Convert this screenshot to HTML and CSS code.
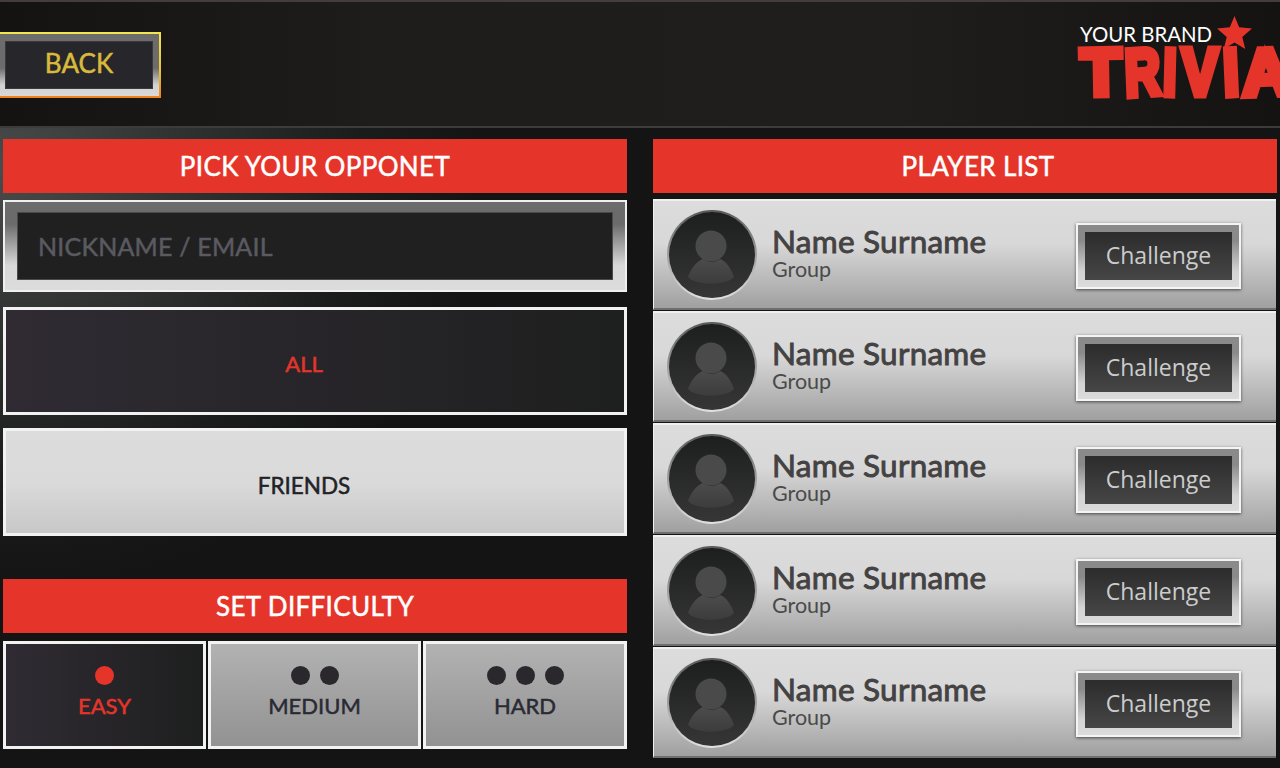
FILE: index.html
```html
<!DOCTYPE html>
<html lang="en">
<head>
    <meta charset="UTF-8">
    <meta name="viewport" content="width=device-width, initial-scale=1.0">
    <title>Your Brand Trivia</title>
    <link rel="stylesheet" href="styles.css">
</head>
<body>
    <header class="topbar">
        <a class="back" href="#">
            <span class="back-frame"><span class="back-inner">BACK</span></span>
        </a>
        <div class="logo">
            <div class="logo-brand">YOUR BRAND</div>
            <svg class="logo-star" viewBox="0 0 36 34"><polygon points="18,0 22.8,11.6 36,13 26,21.6 29.1,34 18,27.2 6.9,34 10,21.6 0,13 13.2,11.6"/></svg>
            <div class="logo-name"><span class="l1">T</span><span class="l2">R</span><span class="l3">I</span><span class="l4">V</span><span class="l5">I</span><span class="l6">A</span></div>
        </div>
    </header>

    <main class="content">
        <section class="left">
            <h2 class="title">PICK YOUR OPPONET</h2>
            <div class="search">
                <input class="search-input" type="text" placeholder="NICKNAME / EMAIL">
            </div>
            <div class="choice choice-on">ALL</div>
            <div class="choice choice-off">FRIENDS</div>

            <h2 class="title title-level">SET DIFFICULTY</h2>
            <div class="levels">
                <div class="level level-easy level-on">
                    <div class="dots"><i></i></div>
                    EASY
                </div>
                <div class="level level-medium">
                    <div class="dots"><i></i><i></i></div>
                    MEDIUM
                </div>
                <div class="level level-hard">
                    <div class="dots"><i></i><i></i><i></i></div>
                    HARD
                </div>
            </div>
        </section>

        <section class="right">
            <h2 class="title title-list">PLAYER LIST</h2>
            <ul class="players">
                <li class="player">
                    <svg class="avatar" viewBox="0 0 90 90"><use href="#person"/></svg>
                    <div class="who"><div class="name">Name Surname</div><div class="group">Group</div></div>
                    <a class="challenge" href="#"><span>Challenge</span></a>
                </li>
                <li class="player">
                    <svg class="avatar" viewBox="0 0 90 90"><use href="#person"/></svg>
                    <div class="who"><div class="name">Name Surname</div><div class="group">Group</div></div>
                    <a class="challenge" href="#"><span>Challenge</span></a>
                </li>
                <li class="player">
                    <svg class="avatar" viewBox="0 0 90 90"><use href="#person"/></svg>
                    <div class="who"><div class="name">Name Surname</div><div class="group">Group</div></div>
                    <a class="challenge" href="#"><span>Challenge</span></a>
                </li>
                <li class="player">
                    <svg class="avatar" viewBox="0 0 90 90"><use href="#person"/></svg>
                    <div class="who"><div class="name">Name Surname</div><div class="group">Group</div></div>
                    <a class="challenge" href="#"><span>Challenge</span></a>
                </li>
                <li class="player">
                    <svg class="avatar" viewBox="0 0 90 90"><use href="#person"/></svg>
                    <div class="who"><div class="name">Name Surname</div><div class="group">Group</div></div>
                    <a class="challenge" href="#"><span>Challenge</span></a>
                </li>
            </ul>
        </section>
    </main>

    <svg class="defs" width="0" height="0">
        <defs>
            <linearGradient id="ring" x1="0" y1="0" x2="0" y2="1">
                <stop offset="0" stop-color="#5a5a5a"/>
                <stop offset="1" stop-color="#e2e2e2"/>
            </linearGradient>
            <linearGradient id="disc" x1="0" y1="0" x2="0" y2="1">
                <stop offset="0" stop-color="#1d1e1e"/>
                <stop offset="1" stop-color="#363636"/>
            </linearGradient>
            <linearGradient id="body" x1="0" y1="0" x2="0" y2="1">
                <stop offset="0" stop-color="#4c4c4c"/>
                <stop offset="1" stop-color="#3c3c3c"/>
            </linearGradient>
            <g id="person">
                <circle cx="45" cy="45" r="45" fill="url(#ring)"/>
                <circle cx="45" cy="45" r="43" fill="url(#disc)"/>
                <circle cx="44" cy="36" r="15.5" fill="#4a4a4a"/>
                <path d="M21 67C24 58 30 51 36 49C41 53 48 53 53 49C59 51 64 58 67 67C60 76 28 76 21 67Z" fill="url(#body)"/>
            </g>
        </defs>
    </svg>
</body>
</html>
```

FILE: styles.css
```css
*{
    box-sizing: border-box;
}
html, body{
    margin: 0;
    height: 100%;
}
body{
    width: 1280px;
    height: 768px;
    overflow: hidden;
    font-family: "Lato", "Liberation Sans", sans-serif;
    background: #141414;
}
.defs{
    display: block;
}

/* top bar */
.topbar{
    height: 128px;
    display: flex;
    justify-content: space-between;
    align-items: flex-start;
    overflow: hidden;
    border-top: 2px solid #463c3e;
    border-bottom: 2px solid #3f3a3b;
    background: linear-gradient(90deg, #141312 0%, #1f1d1c 30%, #201e1d 70%, #141312 100%);
}
.back{
    display: block;
    width: 161px;
    height: 66px;
    margin-top: 30px;
    padding: 2px 2px 2px 0;
    background: linear-gradient(180deg, #f2e64e 0%, #e8c23c 60%, #ef7f1c 100%);
    text-decoration: none;
}
.back-frame{
    display: block;
    height: 100%;
    padding: 7px 6px 7px 5px;
    background: linear-gradient(180deg, #6c6c6c 0%, #6c6c6c 55%, #d2d2d2 82%, #d8d8d8 100%);
}
.back-inner{
    display: flex;
    align-items: center;
    justify-content: center;
    height: 48px;
    padding-bottom: 4px;
    font-size: 26px;
    color: #d9bb3c;
    background: #27262b;
    border: 1px solid #3a3a3c;
    -webkit-text-stroke: 0.5px #d9bb3c;
}
.logo{
    position: relative;
    width: 202px;
    height: 100%;
}
.logo-brand{
    margin: 21px 0 0 2px;
    font-size: 20.4px;
    line-height: 22px;
    color: #fff;
    white-space: nowrap;
}
.logo-star{
    position: absolute;
    left: 139px;
    top: 14px;
    width: 35px;
    height: 33px;
    fill: #e5352a;
}
.logo-name{
    display: flex;
    margin-top: -3px;
    font-family: "Liberation Sans", sans-serif;
    font-weight: 700;
    font-size: 66px;
    line-height: 60px;
    color: #e5352a;
    -webkit-text-stroke: 7px #e5352a;
    white-space: nowrap;
}
.logo-name span{
    display: flex;
    justify-content: center;
    flex: none;
}
.l1{ width: 46px; transform: rotate(-1deg); }
.l2{ width: 37px; transform: scaleX(0.74) rotate(-3deg); }
.l3{ width: 18px; transform: scaleX(0.72) rotate(2deg); }
.l4{ width: 42px; transform: scaleX(0.82); }
.l5{ width: 20px; transform: scaleX(0.85) rotate(-3deg); }
.l6{ width: 50px; transform: rotate(-2deg); }

/* columns */
.content{
    height: 640px;
    display: grid;
    grid-template-columns: 624px 624px;
    column-gap: 26px;
    padding: 11px 3px 0;
    background: radial-gradient(ellipse 480px 420px at 0 40px, #4a4c4c 0%, #323333 35%, #1b1c1c 75%, #141414 100%);
}
.title{
    margin: 0;
    height: 54px;
    display: flex;
    align-items: center;
    justify-content: center;
    font-size: 26px;
    font-weight: 400;
    letter-spacing: 0.35px;
    color: #fff;
    background: #e5352a;
    -webkit-text-stroke: 0.5px #fff;
}
.title-list{
    padding-left: 26px;
}

/* left column */
.search{
    height: 92px;
    margin-top: 7px;
    padding: 10px 12px;
    border: 2px solid #f0f0f0;
    background: linear-gradient(180deg, #6b6b6b 0%, #6b6b6b 25%, #d8d8d8 72%, #dcdcdc 100%);
}
.search-input{
    display: block;
    width: 100%;
    height: 100%;
    padding: 0 0 0 20px;
    border: 1px solid #4a4a4a;
    outline: none;
    background: #202020;
    font-family: inherit;
    font-size: 25px;
    letter-spacing: 0.2px;
    color: #5a5a60;
    -webkit-text-stroke: 0.5px #5a5a60;
}
.search-input::placeholder{
    color: #5a5a60;
    opacity: 1;
}
.choice{
    height: 108px;
    display: flex;
    align-items: center;
    justify-content: center;
    padding: 4px 22px 0 0;
    border: 3px solid #f2f2f2;
    font-size: 22px;
}
.choice-on{
    margin-top: 15px;
    color: #e5352a;
    background: linear-gradient(90deg, #302b33 0%, #1e1f1f 100%);
    -webkit-text-stroke: 0.5px #e5352a;
}
.choice-off{
    margin-top: 13px;
    padding-top: 6px;
    font-size: 22.5px;
    color: #222226;
    background: linear-gradient(180deg, #dcdcdc 0%, #dadada 50%, #c8c8c8 100%);
    -webkit-text-stroke: 0.5px #222226;
}
.title-level{
    margin-top: 43px;
}
.levels{
    display: grid;
    grid-template-columns: 203px 213px 204px;
    column-gap: 2px;
    margin-top: 8px;
}
.level{
    height: 108px;
    padding-top: 22px;
    border: 3px solid #f2f2f2;
    text-align: center;
    font-size: 22px;
    line-height: 28px;
    color: #2a2a33;
    background: linear-gradient(180deg, #b2b2b2 0%, #929292 100%);
    -webkit-text-stroke: 0.5px #2a2a33;
}
.level-on{
    color: #e5352a;
    background: linear-gradient(90deg, #302b33 0%, #1e1f1f 100%);
    -webkit-text-stroke: 0.5px #e5352a;
}
.dots{
    display: flex;
    justify-content: center;
    gap: 10px;
    height: 19px;
    margin-bottom: 7px;
}
.dots i{
    display: block;
    width: 19px;
    height: 19px;
    border-radius: 50%;
    background: #2a282c;
}
.level-on .dots i{
    background: #e5352a;
}

/* player list */
.players{
    list-style: none;
    margin: 6px 1px 0 0;
    padding: 0;
    display: flex;
    flex-direction: column;
    gap: 1px;
}
.player{
    height: 111px;
    display: flex;
    align-items: center;
    padding-left: 13px;
    border-top: 2px solid #f0f0f0;
    border-left: 1px solid #f0f0f0;
    border-bottom: 2px solid #6e6e6e;
    background: linear-gradient(180deg, #dcdcdc 0%, #d8d8d8 40%, #a0a0a0 100%);
}
.avatar{
    width: 90px;
    height: 90px;
    flex: none;
}
.who{
    width: 304px;
    margin: -2px 0 0 15px;
}
.name{
    font-size: 31.5px;
    line-height: 30px;
    font-weight: 400;
    letter-spacing: 0.25px;
    color: #444242;
    -webkit-text-stroke: 0.9px #444242;
}
.group{
    font-size: 21.5px;
    line-height: 26px;
    color: #4a4a4a;
}
.challenge{
    display: block;
    width: 165px;
    height: 66px;
    margin-top: 3px;
    padding: 7px;
    border: 2px solid #f4f4f4;
    box-shadow: 0 1px 3px rgba(0, 0, 0, 0.6);
    background: linear-gradient(180deg, #8a8a8a 0%, #8a8a8a 25%, #d4d4d4 75%, #dcdcdc 100%);
    text-decoration: none;
}
.challenge span{
    display: flex;
    align-items: center;
    justify-content: center;
    height: 100%;
    padding-bottom: 2px;
    font-family: "Open Sans", sans-serif;
    font-size: 23px;
    color: #cccccc;
    background: linear-gradient(180deg, #2c2c2c 0%, #464646 100%);
}
```
